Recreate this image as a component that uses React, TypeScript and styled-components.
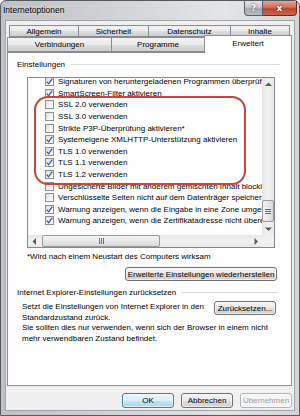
import React from 'react';
import styled, { createGlobalStyle } from 'styled-components';

const GlobalStyle = createGlobalStyle`
  html, body {
    margin: 0;
    padding: 0;
    background: #ffffff;
  }
  body {
    font-family: 'Liberation Sans', Arial, sans-serif;
    font-size: 8px;
    color: #000;
  }
`;

const Window = styled.div`
  box-sizing: border-box;
  width: 300px;
  height: 416px;
  display: flex;
  flex-direction: column;
  padding: 0 4px 4px 4px;
  border: 1px solid #555a60;
  border-radius: 6px 6px 0 0;
  background: linear-gradient(90deg, #bfc1c4 0%, #d4d6d8 45%, #e4e5e6 75%, #d3d4d6 100%);
`;

const TitleBar = styled.div`
  height: 19px;
  display: flex;
  align-items: flex-start;
  flex-shrink: 0;
`;

const Title = styled.span`
  margin: 4px 0 0 -2px;
  font-size: 8.5px;
  line-height: 11px;
  color: #000;
  text-shadow: 0 0 4px rgba(255, 255, 255, 0.9);
`;

const CaptionButton = styled.div<{ $close?: boolean }>`
  height: 15px;
  width: ${({ $close }) => ($close ? '34px' : '19px')};
  box-sizing: border-box;
  display: flex;
  align-items: center;
  justify-content: center;
  border: 1px solid ${({ $close }) => ($close ? '#6e2a20' : '#5e6266')};
  border-top: none;
  border-left: ${({ $close }) => ($close ? 'none' : '1px solid #5e6266')};
  border-radius: ${({ $close }) => ($close ? '0 0 4px 0' : '0 0 0 4px')};
  margin-left: ${({ $close }) => ($close ? '0' : 'auto')};
  margin-right: ${({ $close }) => ($close ? '-2px' : '0')};
  background: ${({ $close }) =>
    $close
      ? 'linear-gradient(180deg, #e6a394 0%, #d2705c 45%, #c0432f 55%, #d0654c 100%)'
      : 'linear-gradient(180deg, #e3e4e6 0%, #c4c7cb 45%, #a3a8ae 55%, #b8bcc1 100%)'};
  color: #fff;
  font-family: 'DejaVu Sans', sans-serif;
  font-weight: bold;
  font-size: 9px;
  text-shadow: 0 0 2px #222;
`;

const Client = styled.div`
  flex: 1;
  display: flex;
  flex-direction: column;
  box-sizing: border-box;
  background: #f0f0f0;
  border: 1px solid #9ea3a8;
  padding: 4px 2px 2px 1px;
`;

const TabRow = styled.div<{ $inset?: boolean }>`
  display: flex;
  padding-left: ${({ $inset }) => ($inset ? '2px' : '0')};
  height: ${({ $inset }) => ($inset ? '12px' : '15px')};
  position: relative;
  z-index: 1;
`;

const Tab = styled.div<{ $w: number; $active?: boolean }>`
  box-sizing: border-box;
  width: ${({ $w }) => $w}px;
  margin-right: -1px;
  display: flex;
  align-items: center;
  justify-content: center;
  border: 1px solid #898c95;
  border-bottom: ${({ $active }) => ($active ? 'none' : '1px solid #898c95')};
  background: ${({ $active }) =>
    $active ? '#ffffff' : 'linear-gradient(180deg, #f3f3f3 0%, #ebebeb 50%, #dddddd 51%, #cfcfcf 100%)'};
  margin-top: ${({ $active }) => ($active ? '-2px' : '0')};
  height: ${({ $active }) => ($active ? '18px' : 'auto')};
  padding-bottom: ${({ $active }) => ($active ? '3px' : '0')};
  font-size: 8px;
  color: #000;
  &:last-child {
    margin-right: 0;
  }
`;

const Panel = styled.div`
  flex: 1;
  box-sizing: border-box;
  background: #ffffff;
  border: 1px solid #898c95;
  padding: 6px 14px 0 9px;
  display: flex;
  flex-direction: column;
`;

const GroupHeader = styled.div<{ $lineEnd?: number }>`
  display: flex;
  align-items: center;
  height: 10px;
  gap: 5px;
  font-size: 8px;
  color: #000;
  &::after {
    content: '';
    flex: 1;
    height: 1px;
    margin-right: ${({ $lineEnd }) => $lineEnd ?? 0}px;
    background: #d5dfe5;
  }
`;

const ListWrap = styled.div`
  position: relative;
  margin: 8px 0 0 10px;
  width: 248px;
  height: 171px;
  box-sizing: border-box;
  border: 1px solid #828790;
  display: grid;
  grid-template-columns: 1fr 12px;
  grid-template-rows: 1fr 12px;
`;

const ListArea = styled.div`
  overflow: hidden;
  position: relative;
`;

const ListInner = styled.div`
  margin-top: -2px;
`;

const Item = styled.div`
  height: 11.6px;
  display: flex;
  align-items: center;
  padding-left: 17px;
  gap: 4px;
  white-space: nowrap;
  font-size: 8px;
  color: #000;
`;

const Box = styled.span`
  flex-shrink: 0;
  width: 9px;
  height: 9px;
  box-sizing: border-box;
  border: 1px solid #8f8f8f;
  background: linear-gradient(135deg, #dcdcdc 0%, #f4f4f4 60%, #ffffff 100%);
  display: flex;
  align-items: center;
  justify-content: center;
`;

const VScroll = styled.div`
  display: flex;
  flex-direction: column;
  background: linear-gradient(90deg, #e6e6e6, #f2f2f2 50%, #e8e8e8);
`;

const HScroll = styled.div`
  display: flex;
  align-items: stretch;
  background: linear-gradient(180deg, #e6e6e6, #f2f2f2 50%, #e8e8e8);
`;

const Corner = styled.div`
  background: #f0f0f0;
`;

const ArrowBtn = styled.div`
  width: 12px;
  height: 12px;
  flex-shrink: 0;
  display: flex;
  align-items: center;
  justify-content: center;
`;

const Track = styled.div<{ $vertical?: boolean }>`
  flex: 1;
  display: flex;
  flex-direction: ${({ $vertical }) => ($vertical ? 'column' : 'row')};
  justify-content: ${({ $vertical }) => ($vertical ? 'flex-end' : 'flex-start')};
`;

const Thumb = styled.div<{ $vertical?: boolean }>`
  box-sizing: border-box;
  border: 1px solid #9a9a9a;
  border-radius: 2px;
  height: ${({ $vertical }) => ($vertical ? '22px' : 'auto')};
  width: ${({ $vertical }) => ($vertical ? 'auto' : '118px')};
  margin: ${({ $vertical }) => ($vertical ? '0 0 1px 0' : '0 0 0 2px')};
  background: ${({ $vertical }) =>
    $vertical
      ? 'linear-gradient(90deg, #f4f4f4, #e8e8e8 50%, #d8d8d8)'
      : 'linear-gradient(180deg, #f4f4f4, #e8e8e8 50%, #d8d8d8)'};
  display: flex;
  align-items: center;
  justify-content: center;
`;

const Note = styled.div`
  margin: 3px 0 0 10px;
  line-height: 11px;
  font-size: 8px;
  color: #000;
`;

const Button = styled.div<{ $w: number; $h?: number; $primary?: boolean; $disabled?: boolean }>`
  box-sizing: border-box;
  width: ${({ $w }) => $w}px;
  height: ${({ $h }) => $h ?? 14}px;
  display: flex;
  align-items: center;
  justify-content: center;
  border-radius: 3px;
  white-space: nowrap;
  font-size: 8px;
  border: 1px solid ${({ $primary, $disabled }) => ($primary ? '#3c7fb1' : $disabled ? '#adb2b5' : '#707070')};
  color: ${({ $disabled }) => ($disabled ? '#a0a0a0' : '#000')};
  background: ${({ $primary, $disabled }) =>
    $disabled
      ? '#f4f4f4'
      : $primary
        ? 'linear-gradient(180deg, #eaf6fd 0%, #d9f0fc 50%, #bee6fd 51%, #a7d9f5 100%)'
        : 'linear-gradient(180deg, #f2f2f2 0%, #ebebeb 50%, #dddddd 51%, #cfcfcf 100%)'};
  box-shadow: inset 0 0 0 1px #ffffffaa;
`;

const RightAlign = styled.div`
  display: flex;
  justify-content: flex-end;
  margin-top: 5px;
`;

const ResetRow = styled.div`
  display: flex;
  justify-content: space-between;
  align-items: flex-start;
  margin: 4px 1px 0 5px;
`;

const Text = styled.div<{ $lh?: number }>`
  line-height: ${({ $lh }) => $lh ?? 11}px;
  font-size: 8px;
  color: #000;
`;

const Para = styled(Text)`
  margin-left: 5px;
`;

const SecondHeader = styled(GroupHeader)`
  margin-top: 6px;
`;

const ButtonRow = styled.div`
  display: flex;
  justify-content: flex-end;
  gap: 7px;
  margin-top: 7px;
  height: 15px;
`;

const Highlight = styled.div`
  position: absolute;
  left: 6px;
  top: 18px;
  width: 212px;
  height: 89px;
  box-sizing: border-box;
  border: 2px solid #c04a38;
  border-radius: 14px;
  pointer-events: none;
`;

const Check = () => (
  <svg width="7" height="7" viewBox="0 0 7 7">
    <path d="M0.8 3.6 L2.6 5.8 L6.3 0.6" fill="none" stroke="#3d55a8" strokeWidth="1.3" />
  </svg>
);

const Arrow = ({ dir }: { dir: 'up' | 'down' | 'left' | 'right' }) => {
  const pts = {
    up: '0,4 3.5,0.5 7,4',
    down: '0,0.5 3.5,4 7,0.5',
    left: '4,0 0.5,3.5 4,7',
    right: '0.5,0 4,3.5 0.5,7',
  }[dir];
  const vertical = dir === 'up' || dir === 'down';
  return (
    <svg width={vertical ? 7 : 5} height={vertical ? 5 : 7} viewBox={vertical ? '0 0 7 5' : '0 0 5 7'}>
      <polygon points={pts} fill="#5a5a5a" />
    </svg>
  );
};

const Grip = ({ vertical }: { vertical?: boolean }) =>
  vertical ? (
    <svg width="6" height="5" viewBox="0 0 6 5">
      <path d="M0 0.5H6M0 2.5H6M0 4.5H6" stroke="#6d6d6d" strokeWidth="1" />
    </svg>
  ) : (
    <svg width="5" height="6" viewBox="0 0 5 6">
      <path d="M0.5 0V6M2.5 0V6M4.5 0V6" stroke="#6d6d6d" strokeWidth="1" />
    </svg>
  );

const items: [string, boolean][] = [
  ['Signaturen von heruntergeladenen Programmen überprüfen', true],
  ['SmartScreen-Filter aktivieren', true],
  ['SSL 2.0 verwenden', false],
  ['SSL 3.0 verwenden', false],
  ['Strikte P3P-Überprüfung aktivieren*', false],
  ['Systemeigene XMLHTTP-Unterstützung aktivieren', true],
  ['TLS 1.0 verwenden', true],
  ['TLS 1.1 verwenden', true],
  ['TLS 1.2 verwenden', true],
  ['Ungesicherte Bilder mit anderem gemischten Inhalt blockieren', false],
  ['Verschlüsselte Seiten nicht auf dem Datenträger speichern', false],
  ['Warnung anzeigen, wenn die Eingabe in eine Zone umgeleitet wird', true],
  ['Warnung anzeigen, wenn die Zertifikatadresse nicht übereinstimmt*', true],
];

export default function App() {
  return (
    <>
      <GlobalStyle />
      <Window>
        <TitleBar>
          <Title>Internetoptionen</Title>
          <CaptionButton>?</CaptionButton>
          <CaptionButton $close>x</CaptionButton>
        </TitleBar>
        <Client>
          <TabRow $inset>
            <Tab $w={70}>Allgemein</Tab>
            <Tab $w={71}>Sicherheit</Tab>
            <Tab $w={83}>Datenschutz</Tab>
            <Tab $w={60}>Inhalte</Tab>
          </TabRow>
          <TabRow>
            <Tab $w={105}>Verbindungen</Tab>
            <Tab $w={94}>Programme</Tab>
            <Tab $w={88} $active>
              Erweitert
            </Tab>
          </TabRow>
          <Panel>
            <GroupHeader $lineEnd={-3}>Einstellungen</GroupHeader>
            <ListWrap>
              <ListArea>
                <ListInner>
                  {items.map(([label, checked]) => (
                    <Item key={label}>
                      <Box>{checked && <Check />}</Box>
                      {label}
                    </Item>
                  ))}
                </ListInner>
              </ListArea>
              <VScroll>
                <ArrowBtn>
                  <Arrow dir="up" />
                </ArrowBtn>
                <Track $vertical>
                  <Thumb $vertical>
                    <Grip vertical />
                  </Thumb>
                </Track>
                <ArrowBtn>
                  <Arrow dir="down" />
                </ArrowBtn>
              </VScroll>
              <HScroll>
                <ArrowBtn>
                  <Arrow dir="left" />
                </ArrowBtn>
                <Track>
                  <Thumb>
                    <Grip />
                  </Thumb>
                </Track>
                <ArrowBtn>
                  <Arrow dir="right" />
                </ArrowBtn>
              </HScroll>
              <Corner />
              <Highlight />
            </ListWrap>
            <Note>*Wird nach einem Neustart des Computers wirksam</Note>
            <RightAlign>
              <Button $w={152}>Erweiterte Einstellungen wiederherstellen</Button>
            </RightAlign>
            <SecondHeader>Internet Explorer-Einstellungen zurücksetzen</SecondHeader>
            <ResetRow>
              <Text>
                Setzt die Einstellungen von Internet Explorer in den
                <br />
                Standardzustand zurück.
              </Text>
              <Button $w={62}>Zurücksetzen...</Button>
            </ResetRow>
            <Para $lh={10.5}>
              Sie sollten dies nur verwenden, wenn sich der Browser in einem nicht
              <br />
              mehr verwendbaren Zustand befindet.
            </Para>
          </Panel>
          <ButtonRow>
            <Button $w={52} $h={15} $primary>
              OK
            </Button>
            <Button $w={52} $h={15}>
              Abbrechen
            </Button>
            <Button $w={52} $h={15} $disabled>
              Übernehmen
            </Button>
          </ButtonRow>
        </Client>
      </Window>
    </>
  );
}
